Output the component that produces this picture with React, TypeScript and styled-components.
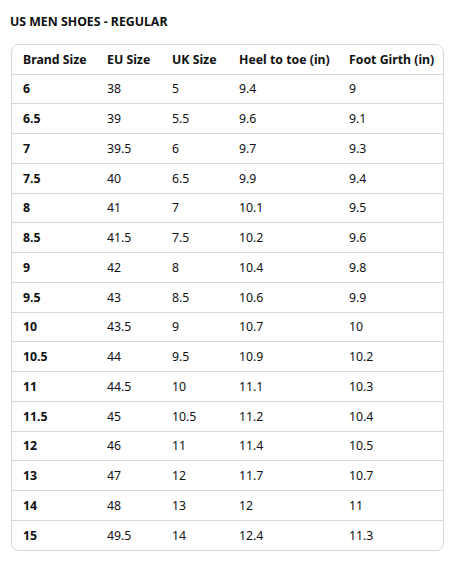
import React from 'react';
import styled, { createGlobalStyle } from 'styled-components';

const GlobalStyle = createGlobalStyle`
  html, body {
    margin: 0;
    padding: 0;
    background: #fff;
  }
  body {
    font-family: 'Noto Sans', 'Liberation Sans', sans-serif;
    color: #0f1111;
  }
`;

const Page = styled.div`
  padding: 13px 22px 0 11px;
`;

const Title = styled.h2`
  margin: 0 0 13px -1px;
  font-size: 12.3px;
  line-height: 18px;
  font-weight: 700;
`;

const Frame = styled.div`
  border: 1px solid #d5d9d9;
  border-radius: 8px;
  overflow: hidden;
`;

const Table = styled.table`
  width: 100%;
  border-collapse: collapse;
  table-layout: fixed;
`;

const Th = styled.th<{ $w?: number }>`
  box-sizing: border-box;
  width: ${(p) => (p.$w ? `${p.$w}px` : 'auto')};
  height: 29px;
  padding: 0 0 0 11px;
  text-align: left;
  font-size: 12.3px;
  font-weight: 700;
  white-space: nowrap;
`;

const Td = styled.td<{ $bold?: boolean }>`
  height: 28.75px;
  padding: 0 0 0 11px;
  border-top: 1px solid #d5d9d9;
  font-size: 12.3px;
  font-weight: ${(p) => (p.$bold ? 700 : 400)};
`;

const headers: [string, number | undefined][] = [
  ['Brand Size', 84],
  ['EU Size', 65],
  ['UK Size', 67],
  ['Heel to toe (in)', 110],
  ['Foot Girth (in)', undefined],
];

const rows = [
  ['6', '38', '5', '9.4', '9'],
  ['6.5', '39', '5.5', '9.6', '9.1'],
  ['7', '39.5', '6', '9.7', '9.3'],
  ['7.5', '40', '6.5', '9.9', '9.4'],
  ['8', '41', '7', '10.1', '9.5'],
  ['8.5', '41.5', '7.5', '10.2', '9.6'],
  ['9', '42', '8', '10.4', '9.8'],
  ['9.5', '43', '8.5', '10.6', '9.9'],
  ['10', '43.5', '9', '10.7', '10'],
  ['10.5', '44', '9.5', '10.9', '10.2'],
  ['11', '44.5', '10', '11.1', '10.3'],
  ['11.5', '45', '10.5', '11.2', '10.4'],
  ['12', '46', '11', '11.4', '10.5'],
  ['13', '47', '12', '11.7', '10.7'],
  ['14', '48', '13', '12', '11'],
  ['15', '49.5', '14', '12.4', '11.3'],
];

export default function App() {
  return (
    <>
      <GlobalStyle />
      <Page>
        <Title>US MEN SHOES - REGULAR</Title>
        <Frame>
          <Table>
            <thead>
              <tr>
                {headers.map(([label, w]) => (
                  <Th key={label} $w={w}>
                    {label}
                  </Th>
                ))}
              </tr>
            </thead>
            <tbody>
              {rows.map((row, index) => (
                <tr key={index}>
                  {row.map((cell, idx) => (
                    <Td key={idx} $bold={idx === 0}>
                      {cell}
                    </Td>
                  ))}
                </tr>
              ))}
            </tbody>
          </Table>
        </Frame>
      </Page>
    </>
  );
}
